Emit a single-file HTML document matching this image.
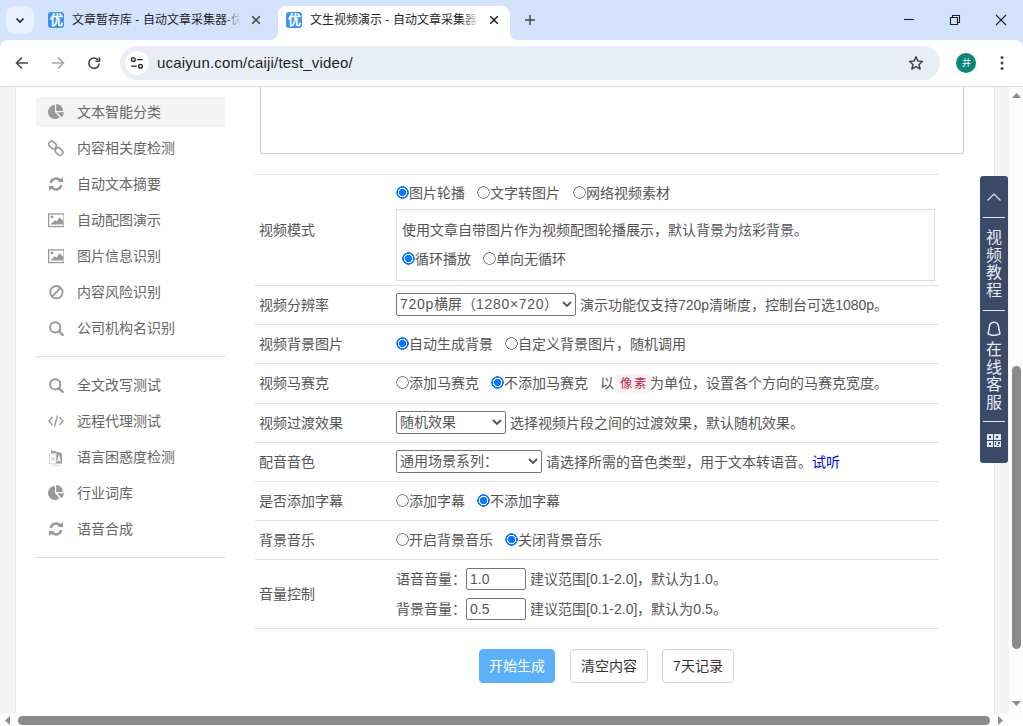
<!DOCTYPE html>
<html lang="zh-CN"><head><meta charset="utf-8">
<style>
*{box-sizing:border-box;margin:0;padding:0}
html,body{width:1023px;height:726px;overflow:hidden;background:#fff;font-family:"Liberation Sans",sans-serif;}
.abs{position:absolute}
#tabbar{position:absolute;left:0;top:0;width:1023px;height:48px;background:#d3e3fd}
#toolbar{position:absolute;left:0;top:40px;width:1023px;height:47px;background:#fff;border-bottom:1px solid #d9dcd9;border-radius:8px 8px 0 0}
#page{position:absolute;left:0;top:87px;width:1023px;height:639px;background:#fff;overflow:hidden}
.strip{position:absolute;top:0;height:626px;background:#f3f3f3}
.side-item{position:absolute;left:36px;width:189px;height:30px;font-size:14px;color:#666;line-height:30px}
.side-item .ic{position:absolute;left:12px;top:7px;width:16px;height:16px}
.side-item .tx{position:absolute;left:41px;top:0}
.sep{position:absolute;left:36px;width:189px;height:1px;background:#ddd}
.row-line{position:absolute;left:255px;width:684px;height:1px;background:#e0e0e0}
.lbl{position:absolute;left:259px;font-size:14px;color:#555;line-height:20px}
.t{position:absolute;font-size:14px;color:#555;line-height:20px;white-space:nowrap}
.radio{display:inline-block;width:13px;height:13px;vertical-align:-1px;margin-right:0;position:relative;border-radius:50%;background:radial-gradient(circle at 6.5px 6.5px,#fff 0 5.1px,#7a7a7a 5.5px 6.1px,rgba(255,255,255,0) 6.6px)}
.radio.on{background:radial-gradient(circle at 6.5px 6.5px,#0a75ff 0 3.4px,#fff 3.9px 4.5px,#0a75ff 5px 6.1px,rgba(255,255,255,0) 6.6px)}
.sel{position:absolute;height:23px;border:1px solid #767676;border-radius:2px;font-size:14px;color:#555;line-height:21px;padding-left:3px;background:#fff}
.sel svg{position:absolute;right:3px;top:6px}
.inp{position:absolute;height:22px;width:60px;border:1px solid #767676;border-radius:2px;font-size:14px;color:#555;line-height:21px;padding-left:3px;background:#fff}
.btn{position:absolute;height:34px;border:1px solid #d3d3d3;border-radius:4px;font-size:14px;color:#333;line-height:33px;text-align:center;background:#fff}
</style></head><body>
<div id="tabbar">
  <div class="abs" style="left:6px;top:6px;width:28px;height:28px;border-radius:8px;background:#e9f0fd"></div>
  <svg class="abs" style="left:14px;top:14px" width="12" height="12" viewBox="0 0 12 12"><path d="M2.5 4.5 L6 8 L9.5 4.5" fill="none" stroke="#1f1f1f" stroke-width="1.6"/></svg>
  <!-- tab 1 -->
  <div class="abs" style="left:48px;top:12px;width:16px;height:16px;border-radius:3px;background:#3d95ee;color:#fff;font-size:13px;line-height:16px;text-align:center;font-weight:bold">优</div>
  <div class="abs" style="left:72px;top:11px;width:168px;height:20px;font-size:12px;line-height:18px;color:#1f1f1f;white-space:nowrap;overflow:hidden">文章暂存库 - 自动文章采集器-优采云</div>
  <div class="abs" style="left:224px;top:9px;width:17px;height:22px;background:linear-gradient(to right,rgba(211,227,253,0),#d3e3fd)"></div>
  <svg class="abs" style="left:251px;top:15px" width="10" height="10" viewBox="0 0 10 10"><path d="M1.2 1.2L8.8 8.8M8.8 1.2L1.2 8.8" stroke="#3c3c3c" stroke-width="1.5"/></svg>
  <!-- active tab -->
  <div class="abs" style="left:278px;top:6px;width:232px;height:34px;background:#fff;border-radius:8px 8px 0 0"></div>
  <div class="abs" style="left:270px;top:32px;width:8px;height:8px;background:radial-gradient(circle at 0 0,#d3e3fd 7.5px,#fff 8.5px)"></div>
  <div class="abs" style="left:510px;top:32px;width:8px;height:8px;background:radial-gradient(circle at 100% 0,#d3e3fd 7.5px,#fff 8.5px)"></div>
  <div class="abs" style="left:286px;top:12px;width:16px;height:16px;border-radius:3px;background:#3d95ee;color:#fff;font-size:13px;line-height:16px;text-align:center;font-weight:bold">优</div>
  <div class="abs" style="left:310px;top:11px;width:168px;height:20px;font-size:12px;line-height:18px;color:#1f1f1f;white-space:nowrap;overflow:hidden">文生视频演示 - 自动文章采集器-优采云</div>
  <div class="abs" style="left:462px;top:9px;width:17px;height:22px;background:linear-gradient(to right,rgba(255,255,255,0),#fff)"></div>
  <svg class="abs" style="left:489px;top:15px" width="10" height="10" viewBox="0 0 10 10"><path d="M1.2 1.2L8.8 8.8M8.8 1.2L1.2 8.8" stroke="#1f1f1f" stroke-width="1.5"/></svg>
  <svg class="abs" style="left:524px;top:14px" width="12" height="12" viewBox="0 0 12 12"><path d="M6 1V11M1 6H11" stroke="#474747" stroke-width="1.5"/></svg>
  <!-- window controls -->
  <svg class="abs" style="left:903px;top:14px" width="12" height="12" viewBox="0 0 12 12"><path d="M1 5.5H11" stroke="#1f1f1f" stroke-width="1.1"/></svg>
  <svg class="abs" style="left:949px;top:14px" width="12" height="12" viewBox="0 0 12 12"><path d="M1.5 3.5H8.5V10.5H1.5Z M3.5 3.5V1.5H10.5V8.5H8.5" fill="none" stroke="#1f1f1f" stroke-width="1.1"/></svg>
  <svg class="abs" style="left:995px;top:14px" width="12" height="12" viewBox="0 0 12 12"><path d="M1 1L11 11M11 1L1 11" stroke="#1f1f1f" stroke-width="1.1"/></svg>
</div>
<div id="toolbar">
  <svg class="abs" style="left:14px;top:15px" width="16" height="16" viewBox="0 0 16 16"><path d="M14 8H3M8 2.5L2.5 8L8 13.5" fill="none" stroke="#474747" stroke-width="1.6"/></svg>
  <svg class="abs" style="left:50px;top:15px" width="16" height="16" viewBox="0 0 16 16"><path d="M2 8H13M8 2.5L13.5 8L8 13.5" fill="none" stroke="#a8abaa" stroke-width="1.6"/></svg>
  <svg class="abs" style="left:86px;top:15px" width="16" height="16" viewBox="0 0 16 16"><path d="M13.2 8.5A5.2 5.2 0 1 1 12 4.8" fill="none" stroke="#474747" stroke-width="1.6"/><path d="M13.4 2.2V6.2H9.4" fill="none" stroke="#474747" stroke-width="1.6"/></svg>
  <div class="abs" style="left:120px;top:6px;width:820px;height:34px;border-radius:17px;background:#e9eef6"></div>
  <div class="abs" style="left:125px;top:11px;width:24px;height:24px;border-radius:12px;background:#fff"></div>
  <svg class="abs" style="left:129px;top:15px" width="16" height="16" viewBox="0 0 16 16"><g fill="none" stroke="#1f1f1f" stroke-width="1.3"><circle cx="4.3" cy="4.6" r="1.9"/><path d="M8.1 4.6H13.7M2.2 11.2H7.7"/><circle cx="11.5" cy="11.2" r="1.9"/></g></svg>
  <div class="abs" style="left:157px;top:13px;font-size:15px;line-height:20px;color:#1f1f1f;letter-spacing:0.17px">ucaiyun.com/caiji/test_video/</div>
  <svg class="abs" style="left:907px;top:14px" width="18" height="18" viewBox="0 0 18 18"><path d="M9 2.8L10.9 7.1L15.5 7.5L12 10.5L13.1 15L9 12.6L4.9 15L6 10.5L2.5 7.5L7.1 7.1Z" fill="none" stroke="#474747" stroke-width="1.5" stroke-linejoin="round"/></svg>
  <div class="abs" style="left:956px;top:13px;width:20px;height:20px;border-radius:10px;background:#0b8577;color:#fff;font-size:9px;line-height:20px;text-align:center">井</div>
  <svg class="abs" style="left:996px;top:14px" width="12" height="18" viewBox="0 0 12 18"><circle cx="6" cy="3.6" r="1.5" fill="#474747"/><circle cx="6" cy="9" r="1.5" fill="#474747"/><circle cx="6" cy="14.4" r="1.5" fill="#474747"/></svg>
</div>
<div id="page">
  <div class="strip" style="left:0;width:16px;border-right:1px solid #e8e8e8"></div>
  <div class="strip" style="left:994px;width:15px;border-left:1px solid #e8e8e8"></div>
  <!-- sidebar -->
  <div class="abs" style="left:36px;top:10px;width:189px;height:30px;border-radius:3px;background:#f4f4f4"></div>
  <div class="side-item" style="top:10px"><svg class="ic" viewBox="0 0 16 16"><g fill="#999"><path d="M7 8V1A7 7 0 1 0 11.64 13.24Z"/><path d="M8.2 6.9V0A6.9 6.9 0 0 1 15.1 6.9Z"/><path d="M9.2 8.3H15.9A6.7 6.7 0 0 1 13.7 13.2Z"/></g></svg><span class="tx">文本智能分类</span></div>
  <div class="side-item" style="top:46px"><svg class="ic" viewBox="0 0 16 16"><g fill="none" stroke="#999" stroke-width="1.6"><rect x="0.6" y="2.1" width="8" height="5.8" rx="2.6" transform="rotate(45 4.6 5)"/><rect x="7.1" y="8.6" width="8" height="5.8" rx="2.6" transform="rotate(45 11.1 11.5)"/><path d="M7 7.6L8.6 9.2"/></g></svg><span class="tx">内容相关度检测</span></div>
  <div class="side-item" style="top:82px"><svg class="ic" viewBox="0 0 16 16"><g fill="none" stroke="#999" stroke-width="2.5"><path d="M2.6 7A5.5 5.5 0 0 1 12.2 4.6"/><path d="M13.4 9A5.5 5.5 0 0 1 3.8 11.4"/></g><path d="M9.6 5.8L15 1V6.2Z" fill="#999"/><path d="M6.4 10.2L1 15V9.8Z" fill="#999"/></svg><span class="tx">自动文本摘要</span></div>
  <div class="side-item" style="top:118px"><svg class="ic" viewBox="0 0 16 16"><rect x="0.65" y="1.95" width="15.4" height="12.6" fill="none" stroke="#999" stroke-width="1.3"/><circle cx="3.9" cy="5" r="1.4" fill="#999"/><path d="M2.4 12.6L6.8 8.2L8.6 9.4L11.6 5.2L15 8.8V12.6Z" fill="#999"/></svg><span class="tx">自动配图演示</span></div>
  <div class="side-item" style="top:154px"><svg class="ic" viewBox="0 0 16 16"><rect x="0.65" y="1.95" width="15.4" height="12.6" fill="none" stroke="#999" stroke-width="1.3"/><circle cx="3.9" cy="5" r="1.4" fill="#999"/><path d="M2.4 12.6L6.8 8.2L8.6 9.4L11.6 5.2L15 8.8V12.6Z" fill="#999"/></svg><span class="tx">图片信息识别</span></div>
  <div class="side-item" style="top:190px"><svg class="ic" viewBox="0 0 16 16"><circle cx="8.4" cy="8.2" r="6.2" fill="none" stroke="#999" stroke-width="1.8"/><path d="M4.2 12.4L12.6 4" stroke="#999" stroke-width="1.8"/></svg><span class="tx">内容风险识别</span></div>
  <div class="side-item" style="top:226px"><svg class="ic" viewBox="0 0 16 16"><circle cx="7.2" cy="7.4" r="5.1" fill="none" stroke="#999" stroke-width="2"/><path d="M10.9 11.1L14.6 14.8" stroke="#999" stroke-width="2.4" stroke-linecap="round"/></svg><span class="tx">公司机构名识别</span></div>
  <div class="sep" style="top:269px"></div>
  <div class="side-item" style="top:283px"><svg class="ic" viewBox="0 0 16 16"><circle cx="7.2" cy="7.4" r="5.1" fill="none" stroke="#999" stroke-width="2"/><path d="M10.9 11.1L14.6 14.8" stroke="#999" stroke-width="2.4" stroke-linecap="round"/></svg><span class="tx">全文改写测试</span></div>
  <div class="side-item" style="top:319px"><svg class="ic" viewBox="0 0 16 16"><path d="M4.5 4L1 8L4.5 12M11.5 4L15 8L11.5 12M9.5 2.5L6.5 13.5" fill="none" stroke="#999" stroke-width="1.3"/></svg><span class="tx">远程代理测试</span></div>
  <div class="side-item" style="top:355px"><svg class="ic" viewBox="0 0 16 16" style="overflow:visible"><path d="M3 1.2L14 4.2V14.6H8V4.6H3Z" fill="#999"/><rect x="1.5" y="4.8" width="6.5" height="10" fill="#fff" stroke="#d6d6d6" stroke-width="1"/><path d="M4 8L6 12M6 8.5L4 12M3.5 9H6.5" stroke="#ccc" stroke-width="0.9" fill="none"/><path d="M9.6 12.6L11 7.4L12.4 12.6M10.1 11H11.9" stroke="#fff" stroke-width="1.1" fill="none"/><path d="M4.5 16.4Q8.5 17.6 12.5 16" stroke="#ddd" stroke-width="1" fill="none"/></svg><span class="tx">语言困惑度检测</span></div>
  <div class="side-item" style="top:391px"><svg class="ic" viewBox="0 0 16 16"><g fill="#999"><path d="M7 8V1A7 7 0 1 0 11.64 13.24Z"/><path d="M8.2 6.9V0A6.9 6.9 0 0 1 15.1 6.9Z"/><path d="M9.2 8.3H15.9A6.7 6.7 0 0 1 13.7 13.2Z"/></g></svg><span class="tx">行业词库</span></div>
  <div class="side-item" style="top:427px"><svg class="ic" viewBox="0 0 16 16"><g fill="none" stroke="#999" stroke-width="2.5"><path d="M2.6 7A5.5 5.5 0 0 1 12.2 4.6"/><path d="M13.4 9A5.5 5.5 0 0 1 3.8 11.4"/></g><path d="M9.6 5.8L15 1V6.2Z" fill="#999"/><path d="M6.4 10.2L1 15V9.8Z" fill="#999"/></svg><span class="tx">语音合成</span></div>
  <div class="sep" style="top:470px"></div>

  <!-- content -->
  <div class="abs" style="left:260px;top:-10px;width:704px;height:77px;border:1px solid #c9cbcf;border-radius:2px;background:#fff"></div>
  <div class="row-line" style="top:87px"></div>
  <div class="row-line" style="top:198px"></div>
  <div class="row-line" style="top:237px"></div>
  <div class="row-line" style="top:276px"></div>
  <div class="row-line" style="top:316px"></div>
  <div class="row-line" style="top:355px"></div>
  <div class="row-line" style="top:394px"></div>
  <div class="row-line" style="top:433px"></div>
  <div class="row-line" style="top:472px"></div>
  <div class="row-line" style="top:541px"></div>
  <div class="lbl" style="top:133px">视频模式</div>
  <div class="lbl" style="top:208px">视频分辨率</div>
  <div class="lbl" style="top:247px">视频背景图片</div>
  <div class="lbl" style="top:286px">视频马赛克</div>
  <div class="lbl" style="top:326px">视频过渡效果</div>
  <div class="lbl" style="top:365px">配音音色</div>
  <div class="lbl" style="top:404px">是否添加字幕</div>
  <div class="lbl" style="top:443px">背景音乐</div>
  <div class="lbl" style="top:497px">音量控制</div>
  <!-- row1 -->
  <div class="t" style="left:396px;top:96px"><i class="radio on"></i>图片轮播</div>
  <div class="t" style="left:477px;top:96px"><i class="radio"></i>文字转图片</div>
  <div class="t" style="left:573px;top:96px"><i class="radio"></i>网络视频素材</div>
  <div class="abs" style="left:396px;top:122px;width:539px;height:72px;border:1px solid #ddd"></div>
  <div class="t" style="left:402px;top:133px">使用文章自带图片作为视频配图轮播展示，默认背景为炫彩背景。</div>
  <div class="t" style="left:402px;top:162px"><i class="radio on"></i>循环播放</div>
  <div class="t" style="left:483px;top:162px"><i class="radio"></i>单向无循环</div>
  <!-- row2 -->
  <div class="sel" style="left:396px;top:206px;width:180px"><span style="letter-spacing:.7px">720p</span>横屏（<span style="letter-spacing:.7px">1280×720</span>）<svg width="10" height="8" viewBox="0 0 10 8"><path d="M1 2L5 6L9 2" fill="none" stroke="#555" stroke-width="1.9"/></svg></div>
  <div class="t" style="left:580px;top:208px">演示功能仅支持720p清晰度，控制台可选1080p。</div>
  <!-- row3 -->
  <div class="t" style="left:396px;top:247px"><i class="radio on"></i>自动生成背景</div>
  <div class="t" style="left:505px;top:247px"><i class="radio"></i>自定义背景图片，随机调用</div>
  <!-- row4 -->
  <div class="t" style="left:396px;top:286px"><i class="radio"></i>添加马赛克</div>
  <div class="t" style="left:491px;top:286px"><i class="radio on"></i>不添加马赛克</div>
  <div class="t" style="left:600px;top:286px">以</div>
  <div class="abs" style="left:615px;top:287px;width:36px;height:19px;background:#f9f2f4;border-radius:4px;color:#c7254e;font-size:12.5px;line-height:21px;padding-left:5px;letter-spacing:1.2px">像素</div>
  <div class="t" style="left:650px;top:286px">为单位，设置各个方向的马赛克宽度。</div>
  <!-- row5 -->
  <div class="sel" style="left:396px;top:324px;width:110px">随机效果<svg width="10" height="8" viewBox="0 0 10 8"><path d="M1 2L5 6L9 2" fill="none" stroke="#555" stroke-width="1.9"/></svg></div>
  <div class="t" style="left:510px;top:326px">选择视频片段之间的过渡效果，默认随机效果。</div>
  <!-- row6 -->
  <div class="sel" style="left:396px;top:363px;width:146px">通用场景系列：<svg width="10" height="8" viewBox="0 0 10 8"><path d="M1 2L5 6L9 2" fill="none" stroke="#555" stroke-width="1.9"/></svg></div>
  <div class="t" style="left:546px;top:365px">请选择所需的音色类型，用于文本转语音。<span style="color:#0000ee">试听</span></div>
  <!-- row7 -->
  <div class="t" style="left:396px;top:404px"><i class="radio"></i>添加字幕</div>
  <div class="t" style="left:477px;top:404px"><i class="radio on"></i>不添加字幕</div>
  <!-- row8 -->
  <div class="t" style="left:396px;top:443px"><i class="radio"></i>开启背景音乐</div>
  <div class="t" style="left:505px;top:443px"><i class="radio on"></i>关闭背景音乐</div>
  <!-- row9 -->
  <div class="t" style="left:396px;top:482px">语音音量：</div>
  <div class="inp" style="left:466px;top:481px">1.0</div>
  <div class="t" style="left:530px;top:482px">建议范围[0.1-2.0]，默认为1.0。</div>
  <div class="t" style="left:396px;top:512px">背景音量：</div>
  <div class="inp" style="left:466px;top:511px">0.5</div>
  <div class="t" style="left:530px;top:512px">建议范围[0.1-2.0]，默认为0.5。</div>
  <!-- buttons -->
  <div class="btn" style="left:479px;top:562px;width:76px;background:#5cb1fa;border-color:#5cb1fa;color:#fff">开始生成</div>
  <div class="btn" style="left:570px;top:562px;width:78px">清空内容</div>
  <div class="btn" style="left:662px;top:562px;width:72px">7天记录</div>
  <!-- float bar -->
  <div class="abs" style="left:980px;top:89px;width:28px;height:287px;background:#3b4a68;border-radius:3px"></div>
  <svg class="abs" style="left:986px;top:105px" width="16" height="10" viewBox="0 0 16 10"><path d="M1.5 8.5L8 2L14.5 8.5" fill="none" stroke="#dfe3ea" stroke-width="1.2"/></svg>
  <div class="abs" style="left:983px;top:130px;width:22px;height:1px;background:#e6e9ee"></div>
  <div class="abs" style="left:984px;top:142px;width:20px;font-size:16px;line-height:17.6px;color:#e6e9ee;text-align:center">视频教程</div>
  <div class="abs" style="left:983px;top:223px;width:22px;height:1px;background:#e6e9ee"></div>
  <svg class="abs" style="left:986px;top:234px" width="16" height="16" viewBox="0 0 16 16"><path d="M8 1.2C4.6 1.2 3.2 4 3.2 7.2C3.2 9.4 2.2 10.8 2 12.4C2.6 13.6 4 13.2 5 13.8C6 14.4 7 14.2 8 14.2C9 14.2 10 14.4 11 13.8C12 13.2 13.4 13.6 14 12.4C13.8 10.8 12.8 9.4 12.8 7.2C12.8 4 11.4 1.2 8 1.2Z" fill="none" stroke="#e6e9ee" stroke-width="1.5"/></svg>
  <div class="abs" style="left:984px;top:254px;width:20px;font-size:16px;line-height:17.6px;color:#e6e9ee;text-align:center">在线客服</div>
  <div class="abs" style="left:983px;top:334px;width:22px;height:1px;background:#e6e9ee"></div>
  <svg class="abs" style="left:987px;top:347px" width="14" height="13" viewBox="0 0 14 13" shape-rendering="crispEdges"><g fill="#dfe3ea"><rect x="0" y="0" width="6" height="6"/><rect x="7" y="0" width="7" height="6"/><rect x="0" y="7" width="6" height="6"/><rect x="7" y="7" width="7" height="6"/></g><g fill="#3b4a68"><rect x="2" y="2" width="2" height="2"/><rect x="9" y="2" width="2" height="2"/><rect x="2" y="9" width="2" height="2"/><rect x="8" y="8" width="1" height="3"/><rect x="10" y="11" width="2" height="1"/><rect x="11" y="8" width="2" height="2"/></g></svg>
  <!-- scrollbars -->
  <div class="abs" style="left:1009px;top:0;width:14px;height:626px;background:#fcfcfc"></div>
  <svg class="abs" style="left:1012px;top:6px" width="9" height="5" viewBox="0 0 9 5"><path d="M0 5L4.5 0L9 5Z" fill="#8b8b8b"/></svg>
  <svg class="abs" style="left:1012px;top:614px" width="9" height="5" viewBox="0 0 9 5"><path d="M0 0L4.5 5L9 0Z" fill="#8b8b8b"/></svg>
  <div class="abs" style="left:1012px;top:279px;width:9px;height:283px;border-radius:5px;background:#8b8b8b"></div>
  <div class="abs" style="left:0;top:626px;width:1023px;height:13px;background:#fcfcfc"></div>
  <svg class="abs" style="left:5px;top:629px" width="5" height="9" viewBox="0 0 5 9"><path d="M5 0L0 4.5L5 9Z" fill="#8b8b8b"/></svg>
  <svg class="abs" style="left:998px;top:629px" width="5" height="9" viewBox="0 0 5 9"><path d="M0 0L5 4.5L0 9Z" fill="#8b8b8b"/></svg>
  <div class="abs" style="left:18px;top:629px;width:972px;height:9px;border-radius:5px;background:#8b8b8b"></div>
  <div class="abs" style="left:1008px;top:626px;width:15px;height:13px;background:#fff"></div>
</div>
</body></html>
